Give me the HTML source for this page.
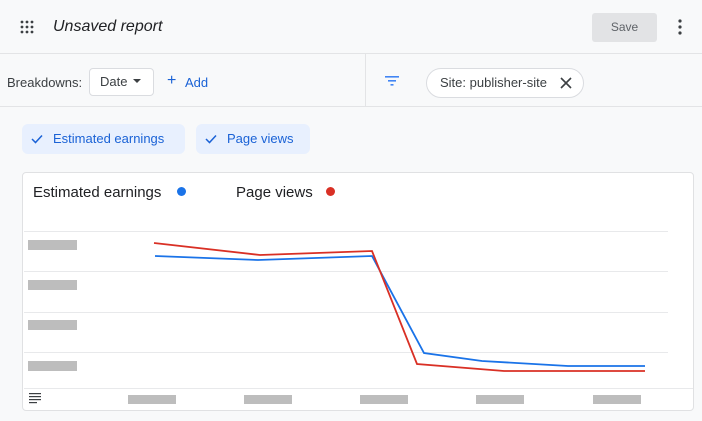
<!DOCTYPE html><html><head><style>
body{margin:0;width:702px;height:421px;background:#f8f9fa;font-family:"Liberation Sans",sans-serif;position:relative;overflow:hidden}
.a{position:absolute}
</style></head><body>
<svg class="a" style="left:20px;top:20px" width="14" height="14"><g fill="#3c4043"><circle cx="2" cy="2" r="1.4"/><circle cx="7" cy="2" r="1.4"/><circle cx="12" cy="2" r="1.4"/><circle cx="2" cy="7" r="1.4"/><circle cx="7" cy="7" r="1.4"/><circle cx="12" cy="7" r="1.4"/><circle cx="2" cy="12" r="1.4"/><circle cx="7" cy="12" r="1.4"/><circle cx="12" cy="12" r="1.4"/></g></svg>
<div class="a" style="left:53px;top:18px;font-size:16px;font-style:italic;color:#202124">Unsaved report</div>
<div class="a" style="left:592px;top:13px;width:65px;height:29px;background:#e2e3e5;border-radius:3px;color:#5f6368;font-size:12px;line-height:29px;text-align:center">Save</div>
<svg class="a" style="left:676px;top:19px" width="8" height="16"><g fill="#3c4043"><circle cx="4" cy="2" r="1.6"/><circle cx="4" cy="8" r="1.6"/><circle cx="4" cy="14" r="1.6"/></g></svg>
<div class="a" style="left:0;top:53px;width:702px;height:1px;background:#e3e4e6"></div>
<div class="a" style="left:0;top:106px;width:702px;height:1px;background:#e3e4e6"></div>
<div class="a" style="left:365px;top:54px;width:1px;height:52px;background:#e3e4e6"></div>
<div class="a" style="left:7px;top:75px;font-size:13px;color:#3c4043">Breakdowns:</div>
<div class="a" style="left:89px;top:68px;width:65px;height:28px;background:#fff;border:1px solid #dadce0;border-radius:4px;box-sizing:border-box"></div>
<div class="a" style="left:100px;top:74px;font-size:13px;color:#3c4043">Date</div>
<svg class="a" style="left:133px;top:79px" width="8" height="5"><path d="M0 0h8L4 4z" fill="#3c4043"/></svg>
<div class="a" style="left:167px;top:72px;font-size:16px;color:#1a62d6">+</div>
<div class="a" style="left:185px;top:75px;font-size:13px;color:#1a62d6">Add</div>
<svg class="a" style="left:384px;top:75px" width="16" height="12"><g fill="#4285f4"><rect x="1" y="1" width="14" height="1.6"/><rect x="4" y="5" width="8" height="1.6"/><rect x="6.5" y="9" width="3" height="1.6"/></g></svg>
<div class="a" style="left:426px;top:68px;width:158px;height:30px;border:1px solid #dadce0;border-radius:15px;box-sizing:border-box;background:#fff"></div>
<div class="a" style="left:440px;top:75px;font-size:13px;color:#3c4043">Site: publisher-site</div>
<svg class="a" style="left:560px;top:77px" width="12" height="12"><path d="M1 1L11 11M11 1L1 11" stroke="#3c4043" stroke-width="1.6"/></svg>
<div class="a" style="left:22px;top:124px;width:163px;height:30px;background:#e8f0fe;border-radius:6px"></div>
<div class="a" style="left:196px;top:124px;width:114px;height:30px;background:#e8f0fe;border-radius:6px"></div>
<svg class="a" style="left:31px;top:134px" width="12" height="10"><path d="M1 5l3.5 3.5L11 1.5" stroke="#1a62d6" stroke-width="1.5" fill="none"/></svg>
<svg class="a" style="left:205px;top:134px" width="12" height="10"><path d="M1 5l3.5 3.5L11 1.5" stroke="#1a62d6" stroke-width="1.5" fill="none"/></svg>
<div class="a" style="left:53px;top:131px;font-size:13px;color:#1a62d6">Estimated earnings</div>
<div class="a" style="left:227px;top:131px;font-size:13px;color:#1a62d6">Page views</div>
<div class="a" style="left:22px;top:172px;width:672px;height:239px;background:#fff;border:1px solid #e0e1e3;border-radius:4px;box-sizing:border-box"></div>
<div class="a" style="left:33px;top:184px;font-size:15px;color:#202124">Estimated earnings</div>
<div class="a" style="left:177px;top:187px;width:9px;height:9px;border-radius:50%;background:#1a73e8"></div>
<div class="a" style="left:236px;top:184px;font-size:15px;color:#202124">Page views</div>
<div class="a" style="left:326px;top:187px;width:9px;height:9px;border-radius:50%;background:#d93025"></div>
<svg class="a" style="left:0;top:0" width="702" height="421">
<g stroke="#e8e9eb" stroke-width="1"><path d="M24 231.5H668M24 271.5H668M24 312.5H668M24 352.5H668M24 388.5H693"/></g>
<g fill="#bdbdbd"><rect x="28" y="240" width="49" height="10"/><rect x="28" y="280" width="49" height="10"/><rect x="28" y="320" width="49" height="10"/><rect x="28" y="361" width="49" height="10"/>
<rect x="128" y="395" width="48" height="9"/><rect x="244" y="395" width="48" height="9"/><rect x="360" y="395" width="48" height="9"/><rect x="476" y="395" width="48" height="9"/><rect x="593" y="395" width="48" height="9"/></g>
<g fill="#3c4043"><rect x="29" y="393" width="12" height="1.2"/><rect x="29" y="396" width="12" height="1.2"/><rect x="29" y="399" width="12" height="1.2"/><rect x="29" y="402" width="8" height="1.2"/></g>
<polyline points="155,256 258,260 372,256 424,353 482,361 568,366 645,366" fill="none" stroke="#1a73e8" stroke-width="1.8"/>
<polyline points="154,243 260,255 372,251 417,364 504,371 645,371" fill="none" stroke="#d93025" stroke-width="1.8"/>
</svg>
</body></html>
